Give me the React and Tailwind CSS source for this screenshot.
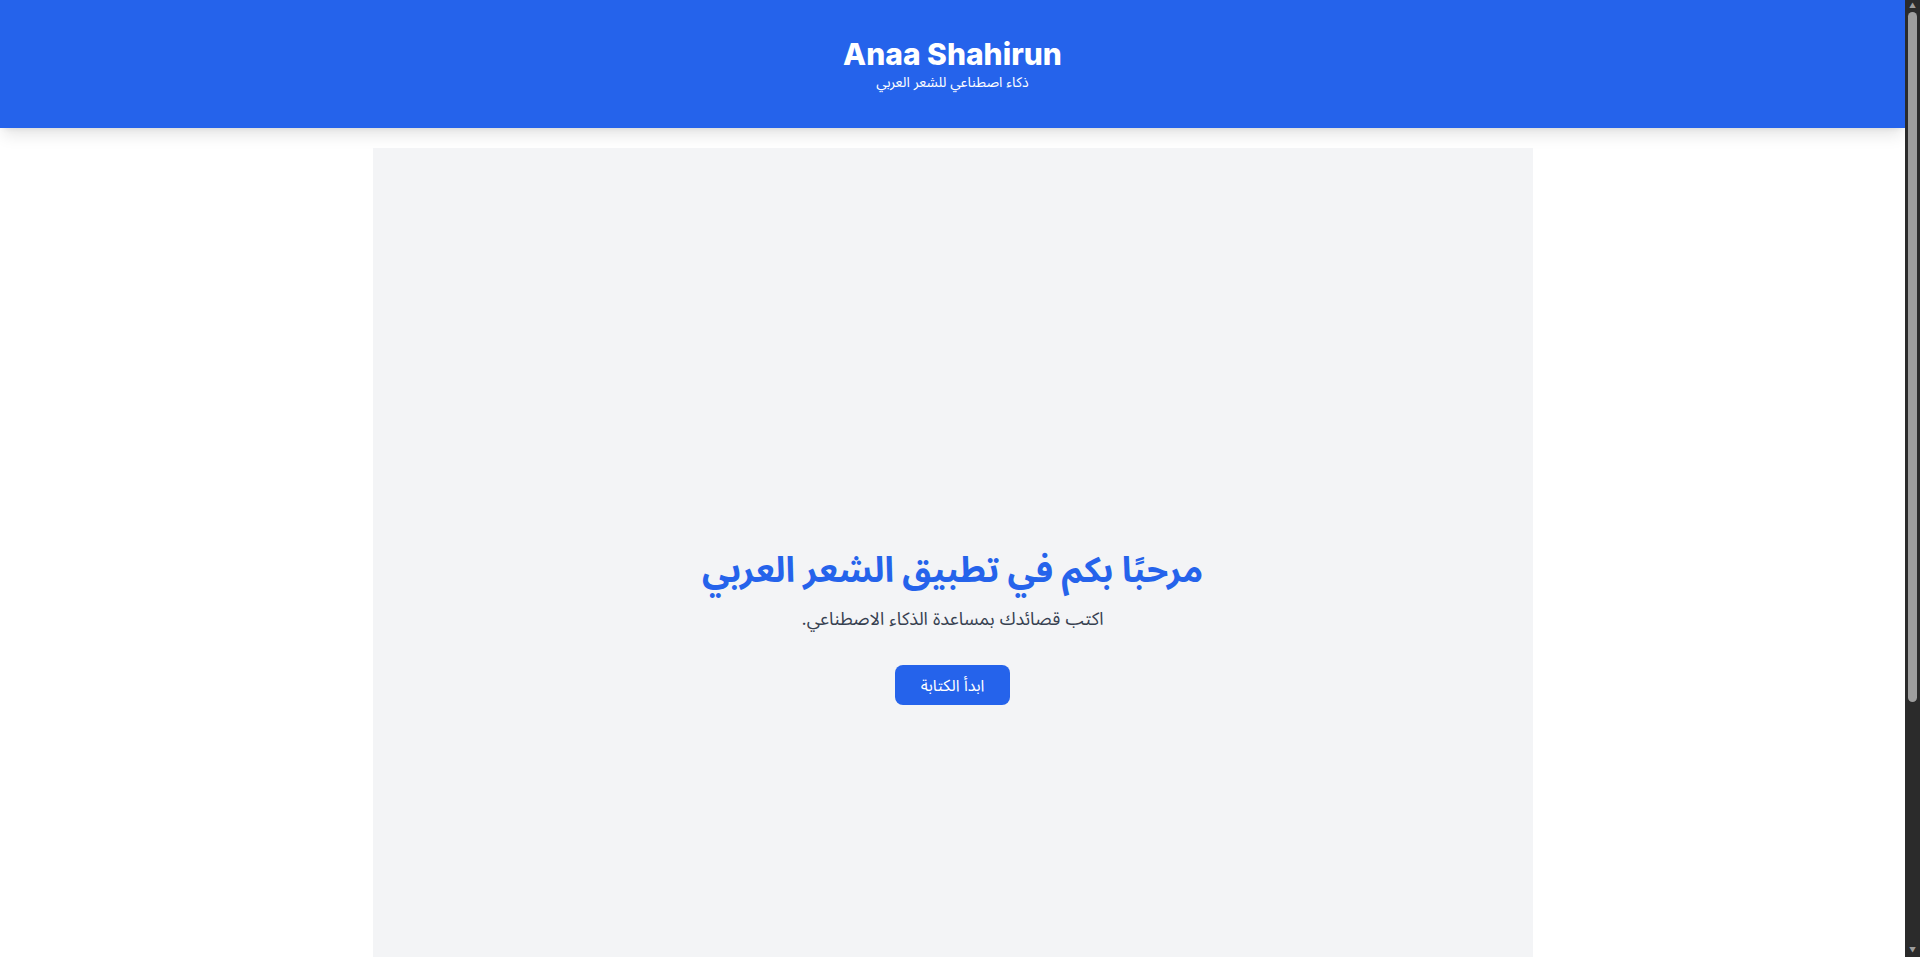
export default function App() {
  return (
    <div className="min-h-screen bg-white pr-[15px] font-['Inter','Noto_Sans_Arabic','Noto_Sans','DejaVu_Sans',sans-serif]">
      {/* Header */}
      <header className="bg-[#2563eb] text-white shadow-lg">
        <div className="flex flex-col items-center pt-9 pb-9">
          <h1 className="text-3xl font-extrabold">Anaa Shahirun</h1>
          <p className="text-sm" dir="rtl">ذكاء اصطناعي للشعر العربي</p>
        </div>
      </header>

      <main className="pt-5 pb-[182px]">
        <section className="max-w-[1160px] mx-auto bg-[#f3f4f6] min-h-screen flex flex-col items-center justify-center text-center" dir="rtl">
          <h2 className="text-[35px] leading-10 font-bold text-[#2563eb] mb-4">مرحبًا بكم في تطبيق الشعر العربي</h2>
          <p className="text-lg text-[#374151] mb-8">اكتب قصائدك بمساعدة الذكاء الاصطناعي.</p>
          <button className="bg-[#2563eb] text-white px-[26px] py-2 rounded-lg">ابدأ الكتابة</button>
        </section>
      </main>

      {/* window scrollbar */}
      <div className="fixed top-0 right-0 w-[15px] h-screen bg-[#2b2b2b] flex flex-col items-center">
        <span className="text-[7px] leading-[12px] text-[#9e9e9e]">▲</span>
        <div className="w-[9px] h-[690px] rounded-full bg-[#9e9e9e]" />
        <div className="flex-1" />
        <span className="text-[7px] leading-[12px] text-[#9e9e9e]">▼</span>
      </div>
    </div>
  );
}
